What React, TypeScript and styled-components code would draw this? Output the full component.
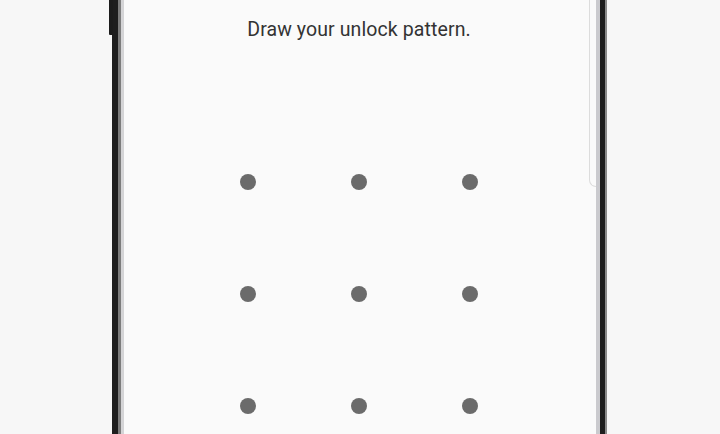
import React from 'react';
import styled, { createGlobalStyle } from 'styled-components';

const GlobalStyle = createGlobalStyle`
  html, body {
    margin: 0;
    padding: 0;
    background: #f7f7f7;
    overflow: hidden;
  }
  #root {
    width: 720px;
    height: 434px;
  }
`;

const Stage = styled.div`
  display: flex;
  width: 720px;
  height: 434px;
  background: #f7f7f7;
`;

const Gutter = styled.div<{ w: number }>`
  flex: 0 0 ${p => p.w}px;
`;

const Bezel = styled.div<{ side: 'left' | 'right' }>`
  position: relative;
  display: flex;
  flex-direction: ${p => (p.side === 'left' ? 'row' : 'row-reverse')};
  flex: 0 0 auto;
`;

const Band = styled.div<{ w: number; c: string }>`
  width: ${p => p.w}px;
  background: ${p => p.c};
`;

const SideKey = styled.div`
  position: absolute;
  left: -3px;
  top: 0;
  width: 4px;
  height: 35px;
  background: #1c1c1c;
  border-bottom-left-radius: 1px;
`;

const Screen = styled.div`
  position: relative;
  flex: 1 1 auto;
  padding-right: 2px;
  background: #fafafa;
  display: flex;
  flex-direction: column;
  align-items: center;
`;

const EdgeKey = styled.div`
  position: absolute;
  right: 0;
  top: -10px;
  width: 6px;
  height: 195px;
  border: 1px solid #dcdcdc;
  border-right: none;
  border-bottom-left-radius: 8px;
`;

const Prompt = styled.div`
  margin-top: 17px;
  font-family: Roboto, "Noto Sans", sans-serif;
  font-size: 19.5px;
  line-height: 26px;
  color: #333333;
  letter-spacing: 0.1px;
`;

const Pattern = styled.div`
  margin-top: 131px;
  display: grid;
  grid-template-columns: repeat(3, 16px);
  grid-auto-rows: 16px;
  column-gap: 95px;
  row-gap: 96px;
`;

const Dot = styled.div`
  width: 16px;
  height: 16px;
  border-radius: 50%;
  background: #6b6b6b;
`;

export default function App() {
  return (
    <>
      <GlobalStyle />
      <Stage>
        <Gutter w={112} />
        <Bezel side="left">
          <SideKey />
          <Band w={6} c="#1e1e1e" />
          <Band w={3} c="#7c7c7c" />
          <Band w={3} c="#d4d4d6" />
        </Bezel>
        <Screen>
          <EdgeKey />
          <Prompt>Draw your unlock pattern.</Prompt>
          <Pattern>
            {Array.from({ length: 9 }).map((_, i) => (
              <Dot key={i} />
            ))}
          </Pattern>
        </Screen>
        <Bezel side="right">
          <Band w={2} c="#8a8a8a" />
          <Band w={5} c="#1e1e1e" />
          <Band w={4} c="#cacace" />
        </Bezel>
        <Gutter w={113} />
      </Stage>
    </>
  );
}
